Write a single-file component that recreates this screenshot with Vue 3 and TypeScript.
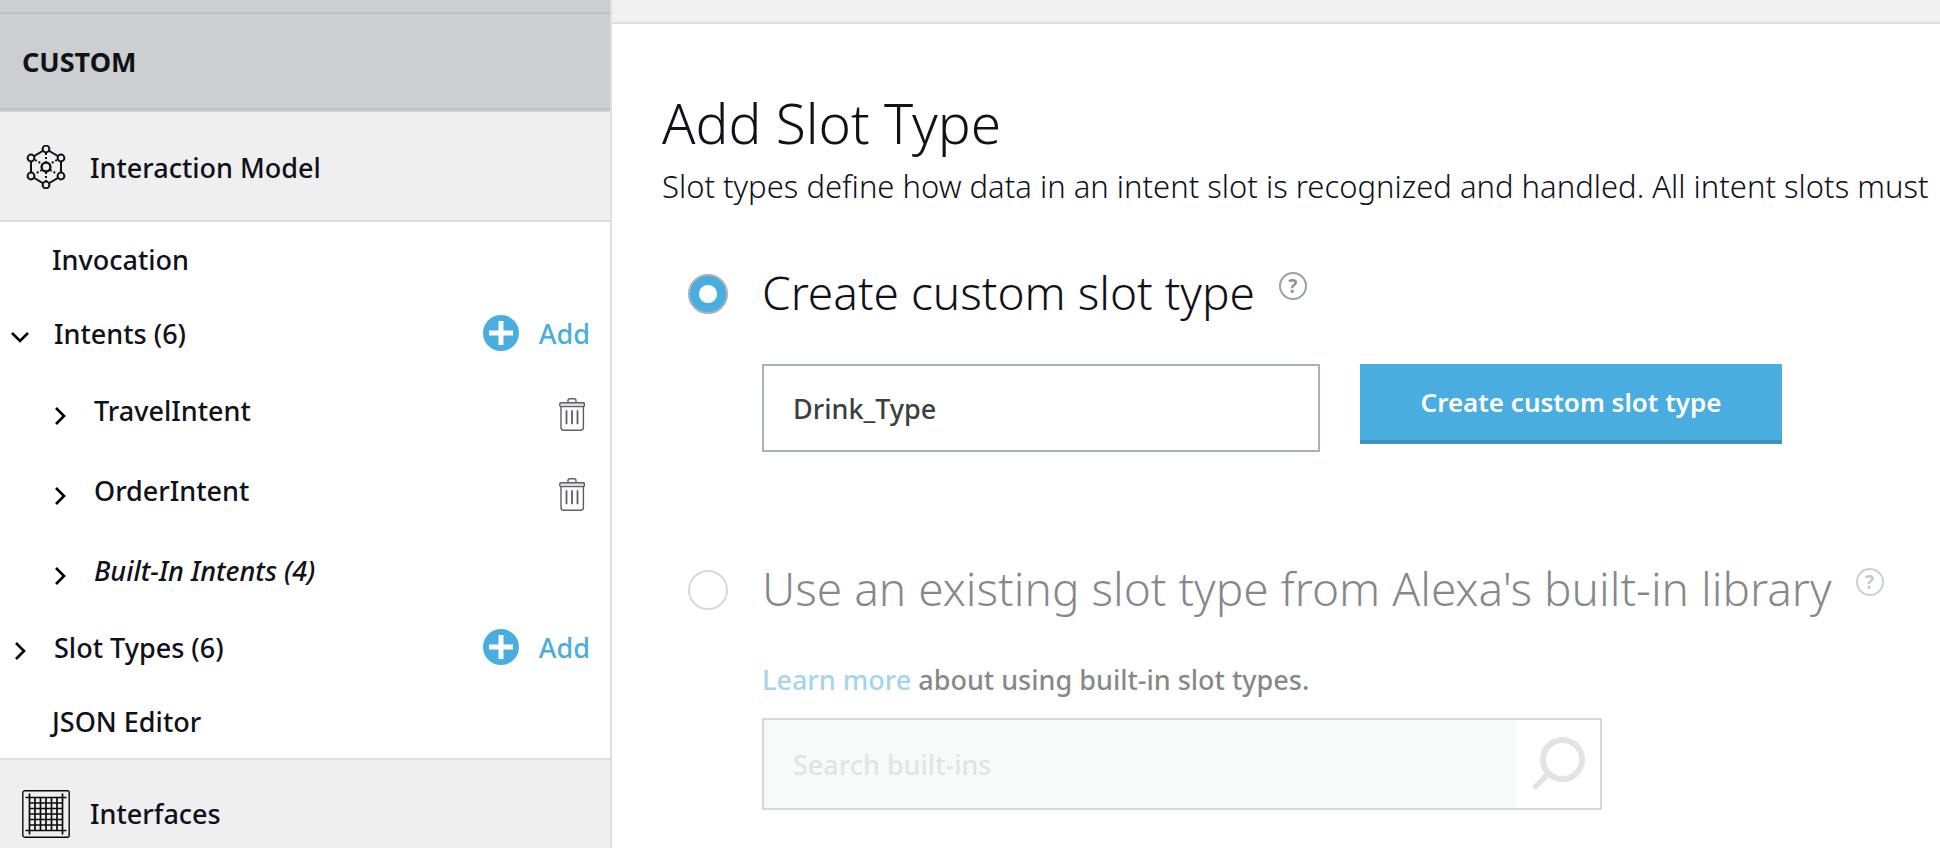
<script setup lang="ts">
import { ref } from 'vue'

interface TreeItem {
  label: string
  level: 'plain' | 'group' | 'child'
  chevron?: 'down' | 'right'
  addable?: boolean
  removable?: boolean
  builtIn?: boolean
}

const items: TreeItem[] = [
  { label: 'Invocation', level: 'plain' },
  { label: 'Intents (6)', level: 'group', chevron: 'down', addable: true },
  { label: 'TravelIntent', level: 'child', chevron: 'right', removable: true },
  { label: 'OrderIntent', level: 'child', chevron: 'right', removable: true },
  { label: 'Built-In Intents (4)', level: 'child', chevron: 'right', builtIn: true },
  { label: 'Slot Types (6)', level: 'group', chevron: 'right', addable: true },
  { label: 'JSON Editor', level: 'plain' },
]

const mode = ref<'custom' | 'existing'>('custom')
const slotName = ref('Drink_Type')
const query = ref('')

const nodes: [number, number][] = [[20, 4], [35, 13], [35, 31], [20, 40], [5, 31], [5, 13]]
const gridLines = [13, 18.5, 24, 29.5, 35]
</script>

<template>
  <div class="page">
    <aside class="sidebar">
      <div class="strip"></div>
      <h2 class="section-title">CUSTOM</h2>
      <a class="section" href="#interaction-model">
        <span class="section-icon">
          <svg width="40" height="44" viewBox="0 0 40 44" fill="none" stroke="#10111a" stroke-width="2" aria-hidden="true">
            <path d="M20 4 35 13V31L20 40 5 31V13Z" />
            <path d="M20 8V17M20 27V36M9 15 16 19M24 25 31 29M31 15 24 19M16 25 9 29" stroke-dasharray="2 2" />
            <circle v-for="([x, y], i) in nodes" :key="i" :cx="x" :cy="y" r="3.4" fill="#efefef" />
            <circle cx="20" cy="22" r="4.4" fill="#efefef" stroke-width="2.4" />
          </svg>
        </span>
        Interaction Model
      </a>
      <nav class="tree" aria-label="Interaction model">
        <ul>
          <li v-for="item in items" :key="item.label" :class="['row', item.level, { 'built-in': item.builtIn }]">
            <button v-if="item.chevron" class="chevron" type="button" :aria-label="'Toggle ' + item.label">
              <svg v-if="item.chevron === 'down'" width="20" height="20" viewBox="0 0 20 20" fill="none" stroke="#000" stroke-width="2.6" aria-hidden="true">
                <path d="M2 6 10 14 18 6" />
              </svg>
              <svg v-else width="20" height="20" viewBox="0 0 20 20" fill="none" stroke="#000" stroke-width="2.6" aria-hidden="true">
                <path d="M6 2 14 10 6 18" />
              </svg>
            </button>
            <a class="label" href="#item">{{ item.label }}</a>
            <button v-if="item.addable" class="add" type="button">
              <svg width="36" height="36" viewBox="0 0 36 36" aria-hidden="true">
                <circle cx="18" cy="18" r="18" fill="#4aade0" />
                <path d="M18 6V30M6 18H30" stroke="#fff" stroke-width="5" />
              </svg>
              Add
            </button>
            <button v-if="item.removable" class="remove" type="button" :aria-label="'Delete ' + item.label">
              <svg width="26" height="33" viewBox="0 0 26 33" fill="none" stroke="#5e5e68" stroke-width="1.4" aria-hidden="true">
                <path d="M9 4.5V2.6Q9 .8 10.8 .8H15.2Q17 .8 17 2.6V4.5" />
                <path d="M2 8.6V29.5Q2 32.2 4.6 32.2H21.8Q24.4 32.2 24.4 29.5V8.6" />
                <rect x=".8" y="4.7" width="24.6" height="3.9" rx="1" fill="#dcdce0" />
                <path d="M7.5 12.3V26.3M13 12.3V26.3M18.5 12.3V26.3" stroke-width="1.8" />
              </svg>
            </button>
          </li>
        </ul>
      </nav>
      <a class="section last" href="#interfaces">
        <span class="section-icon">
          <svg width="48" height="48" viewBox="0 0 48 48" fill="none" stroke="#0a0a0a" stroke-width="1.7" aria-hidden="true">
            <rect x=".8" y=".8" width="46.4" height="46.4" rx="2" stroke-width="1.4" />
            <path d="M7.5 3.5V44.5M40.5 3.5V44.5M3.5 7.5H44.5M3.5 40.5H44.5" />
            <path v-for="n in gridLines" :key="n" :d="`M${n} 7.5V40.5M7.5 ${n}H40.5`" />
          </svg>
        </span>
        Interfaces
      </a>
    </aside>

    <main class="main">
      <div class="topbar"></div>
      <div class="content">
        <h1>Add Slot Type</h1>
        <p class="intro">Slot types define how data in an intent slot is recognized and handled. All intent slots must</p>

        <section class="option">
          <div class="option-head">
            <input id="mode-custom" v-model="mode" type="radio" name="mode" value="custom" />
            <label for="mode-custom">Create custom slot type</label>
            <button class="help" type="button" aria-label="Help about custom slot types">?</button>
          </div>
          <div class="fields">
            <input v-model="slotName" class="name" type="text" aria-label="Slot type name" />
            <button class="create" type="button">Create custom slot type</button>
          </div>
        </section>

        <section class="option inactive">
          <div class="option-head">
            <input id="mode-existing" v-model="mode" type="radio" name="mode" value="existing" />
            <label for="mode-existing">Use an existing slot type from Alexa's built-in library</label>
            <button class="help" type="button" aria-label="Help about built-in slot types">?</button>
          </div>
          <p class="learn"><a href="#learn">Learn more</a> about using built-in slot types.</p>
          <div class="search">
            <input v-model="query" type="text" placeholder="Search built-ins" aria-label="Search built-ins" />
            <button type="button" aria-label="Search">
              <svg width="84" height="88" viewBox="0 0 84 88" fill="none" stroke="#c9c9c9" aria-hidden="true">
                <circle cx="46.5" cy="39.5" r="19.5" stroke-width="6" />
                <path d="M33 53 18 68" stroke-width="5.4" />
              </svg>
            </button>
          </div>
        </section>
      </div>
    </main>
  </div>
</template>

<style>
body {
  margin: 0;
  background: #fff;
}
</style>

<style scoped>
* {
  box-sizing: border-box;
}

.page {
  display: flex;
  min-height: 100vh;
  color: #10111a;
  font-family: "Noto Sans", "Open Sans", sans-serif;
  font-size: 27px;
  font-weight: 500;
}

button,
input {
  font: inherit;
  color: inherit;
}

button {
  padding: 0;
  border: 0;
  background: none;
  cursor: pointer;
}

svg {
  display: block;
}

a {
  color: inherit;
  text-decoration: none;
}

.sidebar {
  display: flex;
  flex: 0 0 612px;
  flex-direction: column;
  border-right: 2px solid #dedede;
}

.strip {
  height: 12px;
  background: #cbcfcf;
}

.section-title {
  display: flex;
  align-items: center;
  height: 98px;
  margin: 0 0 2px;
  padding: 0 22px;
  border: solid #c2c0c2;
  border-width: 2px 0;
  background: #cbcfcf;
  box-shadow: 0 2px #cbcfcf;
  font-size: 27px;
  font-weight: 700;
}

.section {
  display: flex;
  gap: 20px;
  align-items: center;
  height: 110px;
  padding: 2px 22px 0;
  border-bottom: 2px solid #dedede;
  background: #efefef;
}

.section-icon {
  display: flex;
  justify-content: center;
  width: 48px;
}

.section.last {
  flex: 1;
  align-items: flex-start;
  height: auto;
  padding-top: 30px;
  border-top: 2px solid #dedede;
  border-bottom: 0;
  line-height: 48px;
}

.tree ul {
  margin: 0;
  padding: 0;
  list-style: none;
}

.row {
  display: flex;
  align-items: center;
  height: 74px;
  padding: 0 20px 0 10px;
}

.row.plain {
  padding-left: 52px;
}

.row.child {
  height: 80px;
  padding: 0 25px 0 50px;
}

.label {
  flex: 1;
}

.built-in .label {
  font-style: italic;
}

.chevron {
  width: 20px;
  margin-top: 8px;
  margin-right: 24px;
}

.child .chevron {
  margin-top: 12px;
}

.add {
  display: flex;
  gap: 20px;
  align-items: center;
  color: #4aade0;
}

.remove {
  margin-top: 8px;
}

.main {
  flex: 1;
  min-width: 0;
  overflow: hidden;
}

.topbar {
  height: 24px;
  border-bottom: 2px solid #dedede;
  background: #f0f0f0;
}

.content {
  padding: 63px 0 0 50px;
}

h1 {
  margin: 0;
  font-size: 55px;
  font-weight: 350;
  line-height: 72px;
}

.intro {
  margin: 3px 0 0;
  font-size: 31px;
  font-weight: 300;
  line-height: 48px;
  white-space: nowrap;
}

.option {
  margin-top: 52px;
  padding-left: 26px;
}

.option-head {
  display: flex;
  align-items: center;
  height: 60px;
  font-size: 46px;
  font-weight: 350;
  white-space: nowrap;
}

.option-head input {
  flex: none;
  width: 40px;
  height: 40px;
  margin: 4px 34px 0 0;
  border: 2px solid #b4b4ba;
  border-radius: 50%;
  appearance: none;
  background: #fff;
}

.option-head input:checked {
  border-color: #a9b2bb;
  background: radial-gradient(circle, #fff 8.5px, #4aade0 9.5px);
}

.help {
  display: flex;
  flex: none;
  justify-content: center;
  align-items: center;
  align-self: flex-start;
  width: 28px;
  height: 28px;
  margin: 10px 0 0 24px;
  border: 2px solid #98a3a4;
  border-radius: 50%;
  color: #879596;
  font-size: 19px;
  font-weight: 700;
  line-height: 24px;
}

.fields {
  display: flex;
  gap: 40px;
  align-items: flex-start;
  margin: 42px 40px 0 74px;
}

.name {
  flex: 0 1 558px;
  min-width: 0;
  height: 88px;
  padding: 0 29px;
  border: 2px solid #a5b3b3;
  border-radius: 0;
  background: #fff;
  color: #3a3f40;
}

.create {
  flex: 0 1 422px;
  height: 80px;
  border-bottom: 4px solid #4092c0;
  background: #4aade0;
  color: #fff;
  font-size: 26px;
  font-weight: 600;
}

.inactive {
  margin-top: 106px;
  opacity: 0.5;
}

.learn {
  margin: 42px 0 18px 74px;
  line-height: 40px;
}

.learn a {
  color: #4aade0;
}

.search {
  display: flex;
  max-width: 840px;
  height: 92px;
  margin-left: 74px;
  border: 2px solid #aab5b2;
}

.search input {
  flex: 1;
  min-width: 0;
  padding: 0 29px;
  border: 0;
  background: #f2f6f5;
}

.search input::placeholder {
  color: #c9c9c9;
  opacity: 1;
}

.search button {
  background: #fff;
}
</style>
